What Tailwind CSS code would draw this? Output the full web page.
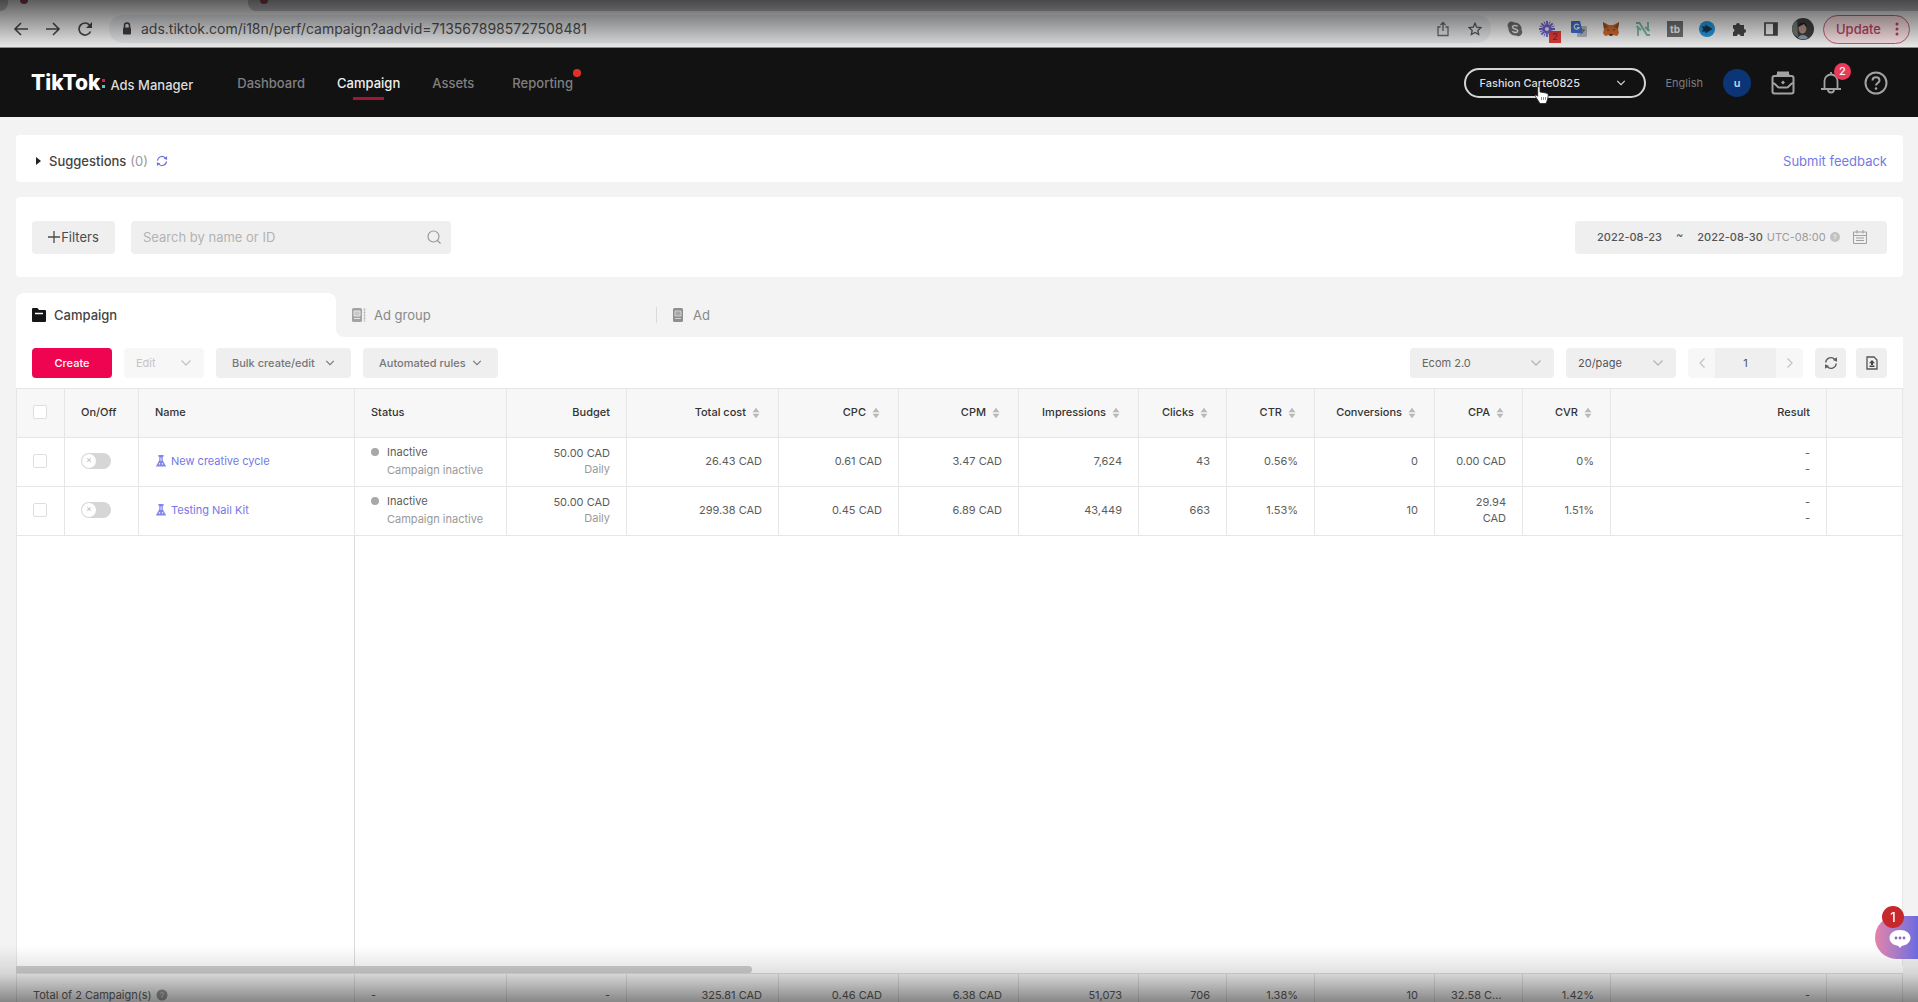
<!DOCTYPE html>
<html lang="en">
<head>
  <meta charset="UTF-8">
  <meta name="viewport" content="width=device-width, initial-scale=1">
  <title>TikTok Ads Manager</title>
  <script src="https://cdn.jsdelivr.net/npm/@tailwindcss/browser@4"></script>
</head>
<body class="h-screen flex flex-col overflow-hidden bg-[#f3f3f3] font-['Inter',sans-serif] text-[11px] leading-4 text-[#5c5c5c]">

  <!-- shared icons -->
  <svg class="hidden">
    <symbol id="chevron" viewBox="0 0 12 8"><path d="M1.500 1.500 6 6l4.500-4.500" fill="none" stroke="currentColor" stroke-width="1.300"/></symbol>
    <symbol id="sort" viewBox="0 0 9 14"><path d="M4.500 1 8.500 6H.5zM4.500 13 8.500 8H.5z" fill="#b9b9b9"/></symbol>
    <symbol id="flask" viewBox="0 0 12 14"><path d="M3 0h6v2H8v4l4 7.500H0L4 6V2H3z" fill="#8286e8"/><path d="M5.500 3h1v4h-1zM3.500 9.500H5V11H3.500zM7 9.500h1.500V11H7z" fill="#fff"/></symbol>
    <symbol id="refresh" viewBox="0 0 16 16"><path d="M14 8.500A6 6 0 0 1 3.500 12M2 7.500A6 6 0 0 1 12.500 4" fill="none" stroke="currentColor" stroke-width="1.500"/><path d="M14.800 1.500v5l-4.600-1.800zM1.200 14.500v-5l4.600 1.800z" fill="currentColor"/></symbol>
  </svg>

  <!-- browser chrome -->
  <div class="relative shrink-0 bg-[#e8e8e8] border-b border-[#8c8c8c]">
    <div class="h-[11px] bg-[#b4b5b9] flex">
      <div class="w-[248px] bg-[#e8e8e8] flex"><div class="w-2 bg-[#b4b5b9] rounded-br-lg"></div><div class="ml-3 w-2 h-1 rounded-b bg-[#8f3d4c]"></div></div>
      <div class="flex-1 bg-[#e8e8e8]"><div class="h-full bg-[#b4b5b9] rounded-bl-lg px-3"><div class="w-2 h-1 rounded-b bg-[#8f3d4c]"></div></div></div>
    </div>
    <div class="h-9 flex items-center pl-[5px] pr-2 text-[#444]">
      <button class="w-8 grid place-items-center" aria-label="Back"><svg class="size-4" viewBox="0 0 16 16" fill="none" stroke="currentColor" stroke-width="1.600"><path d="M15 8H2M8 2 2 8l6 6"/></svg></button>
      <button class="w-8 grid place-items-center" aria-label="Forward"><svg class="size-4" viewBox="0 0 16 16" fill="none" stroke="currentColor" stroke-width="1.600"><path d="M1 8h13M8 2l6 6-6 6"/></svg></button>
      <button class="w-8 grid place-items-center" aria-label="Reload"><svg class="size-4" viewBox="0 0 16 16"><path d="M13.500 10.500A6 6 0 1 1 12.500 4" fill="none" stroke="currentColor" stroke-width="1.700"/><path d="M15 1v6H9z" fill="currentColor"/></svg></button>
      <div class="flex-1 h-7 ml-2 pl-3 rounded-full bg-[#dadbdd] flex items-center">
        <svg class="w-3 h-4 mr-2" viewBox="0 0 12 16"><path d="M3.500 7V4.500a2.500 2.500 0 0 1 5 0V7" fill="none" stroke="#3c3c3c" stroke-width="1.500"/><rect x="2" y="6.500" width="8" height="7" rx="1" fill="#3c3c3c"/></svg>
        <input class="flex-1 text-sm text-[#4a4a4a] outline-none" aria-label="Address" value="ads.tiktok.com/i18n/perf/campaign?aadvid=7135678985727508481">
        <button class="w-8 grid place-items-center" aria-label="Share"><svg class="w-3 h-4" viewBox="0 0 12 16" fill="none" stroke="#666" stroke-width="1.300"><path d="M3.500 6H1v8.500h10V6H8.500M6 10V1.500M3.500 4 6 1.500 8.500 4"/></svg></button>
        <button class="w-8 grid place-items-center" aria-label="Bookmark"><svg class="size-3.5" viewBox="0 0 16 16" fill="none" stroke="#555" stroke-width="1.500"><path d="m8 1.500 2 4.400 4.800.5-3.600 3.200 1 4.700L8 11.900l-4.200 2.400 1-4.700L1.200 6.400 6 5.900z"/></svg></button>
      </div>
      <div class="flex items-center pl-2">
        <span class="w-8 grid place-items-center"><svg class="size-4" viewBox="0 0 16 16"><path d="M4.500.5a4 4 0 0 1 2.600 1A6.600 6.600 0 0 1 14.500 9a4 4 0 0 1-5.600 5.500A6.600 6.600 0 0 1 1.500 7a4 4 0 0 1 3-6.500z" fill="#6b6b6b"/><path d="M10.500 5.500C9.500 4 5.500 4 5.500 6.200 5.500 8.500 10.700 7.500 10.700 9.800c0 2.200-4.200 2.200-5.200.2" fill="none" stroke="#e4e4e4" stroke-width="1.500"/></svg></span>
        <span class="w-8 grid place-items-center relative"><svg class="size-4" viewBox="0 0 16 16" stroke="#6a5ccb" stroke-width="1.800"><path d="M8 0v16M0 8h16M2.300 2.300l11.400 11.400M13.700 2.300 2.300 13.700"/><path d="M5 .7l6 14.600M11 .7 5 15.300M.7 5l14.600 6M.7 11l14.600-6" stroke-width="1"/><circle cx="8" cy="8" r="3" fill="#dcdcdc"/></svg><span class="absolute left-[18px] top-2.5 size-3 bg-[#d83a36] text-[#7d1d1d] text-[9px] leading-3 text-center">2</span></span>
        <span class="w-8 grid place-items-center"><svg class="size-4" viewBox="0 0 16 16"><rect x="6" y="5" width="10" height="11" rx="1" fill="#a9b2ba"/><path d="M1 0h8l3 12H1a1 1 0 0 1-1-1V1a1 1 0 0 1 1-1z" fill="#3d6cc6"/><path d="M7.800 4.200a2.500 2.500 0 1 0 .3 2.300H6" fill="none" stroke="#dbe5f6" stroke-width="1.200"/><path d="M9 9h5M11.500 8v1M13 9c-.5 2-2 3.500-3.500 4" fill="none" stroke="#56666f"/></svg></span>
        <span class="w-8 grid place-items-center"><svg class="size-4" viewBox="0 0 16 16"><path d="m0 1 6 3h4l6-3-1 7 1 4-2 3-4-1-1 1H7l-1-1-4 1-2-3 1-4z" fill="#c9652a"/><path d="m0 1 5 5-4 2zM16 1l-5 5 4 2z" fill="#8b4a22"/><path d="m4 8 2 1-1 1zM12 8l-2 1 1 1zM6.500 13h3v1.500h-3z" fill="#33302e"/></svg></span>
        <span class="w-8 grid place-items-center"><svg class="size-4" viewBox="0 0 16 16" fill="none" stroke="#6fb09b" stroke-width="1.800"><path d="M1 2h3.500L12 14h3M3 15V6M13 1v9M1.500 5 6 9M10 6l4.500 4"/></svg></span>
        <span class="w-8 grid place-items-center"><span class="size-4 bg-[#6e6e6e] text-[#ececec] text-[10px] leading-4 font-bold text-center">tb</span></span>
        <span class="w-8 grid place-items-center"><svg class="size-4" viewBox="0 0 16 16"><circle cx="8" cy="8" r="8" fill="#2191d6"/><path d="M2.500 5.500h4v-2L13.500 8l-7 4.500v-2h-4l2-2.500z" fill="#16354c"/></svg></span>
        <span class="w-8 grid place-items-center"><svg class="size-4" viewBox="0 0 16 16"><path d="M5 4a2 2 0 1 1 4 0h4v4a2 2 0 1 1 0 4v3H9.500a1.800 1.800 0 0 0-3.600 0H2v-4a1.800 1.800 0 0 0 0-3.500V4z" fill="#454545"/></svg></span>
        <span class="w-8 grid place-items-center"><svg class="size-4" viewBox="0 0 16 16"><path d="M2 2h12v12H2z" fill="none" stroke="#454545" stroke-width="1.700"/><path d="M10 2h4v12h-4z" fill="#454545"/></svg></span>
        <span class="w-8 grid place-items-center"><svg class="size-[22px]" viewBox="0 0 22 22"><circle cx="11" cy="11" r="11" fill="#3a3d3f"/><path d="M0 11a11 11 0 0 1 5-9l1 17a11 11 0 0 1-6-8z" fill="#6f7a70"/><ellipse cx="10.500" cy="10" rx="4" ry="5.500" fill="#b08f80"/><path d="M6 9c1-6 9-6 9 1l-3-4z" fill="#1f1d1d"/><path d="M6 20c1-4 8-4 10 0a11 11 0 0 1-10 0z" fill="#8b9aa8"/></svg></span>
        <button class="ml-1 h-[29px] pl-3 pr-2.5 rounded-full border border-[#c2556e] bg-[#f0d9dc] text-[#b5405a] text-[13px] font-medium flex items-center gap-3.5">Update<svg class="w-1 h-4" viewBox="0 0 4 16" fill="currentColor"><circle cx="2" cy="3" r="1.500"/><circle cx="2" cy="8" r="1.500"/><circle cx="2" cy="13" r="1.500"/></svg></button>
      </div>
    </div>
    <div class="absolute inset-0 pointer-events-none bg-linear-to-b from-black/60 to-transparent"></div>
  </div>

  <!-- header -->
  <header class="shrink-0 h-[69px] bg-[#121212] flex items-center pl-[31px] pr-[30px]">
    <a href="#" class="flex items-baseline text-white"><span class="text-[21px] leading-6 font-extrabold">TikTok</span><svg class="w-1 h-3 mx-0.5" viewBox="0 0 4 12"><rect y="1" width="3" height="3" fill="#c22447"/><rect y="7" width="3" height="3" fill="#4fc9c2"/></svg><span class="ml-0.5 text-[13px] font-medium text-[#dcdcdc]">Ads Manager</span></a>
    <nav class="flex gap-8 ml-11 text-[13px] text-[#808080] font-medium">
      <a href="#">Dashboard</a>
      <a href="#" class="relative text-[#f0f0f0]">Campaign<span class="absolute left-4 right-4 top-[22px] h-[3px] bg-[#a3163a]"></span></a>
      <a href="#">Assets</a>
      <a href="#" class="relative ml-1.5">Reporting<span class="absolute -right-2 -top-1.5 size-2 rounded-full bg-[#e0302c]"></span></a>
    </nav>
    <div class="ml-auto flex items-center">
      <button class="relative w-[182px] h-[30px] rounded-full border-2 border-[#d5d5d5] px-3.5 flex items-center justify-between text-[#dedede] font-medium">Fashion Carte0825<svg class="w-2.5 h-2 mr-1"><use href="#chevron"/></svg>
        <svg class="absolute left-[68px] top-[15px] w-4 h-5" viewBox="0 0 16 20"><path d="M4.500 1.500c1 0 1.500.5 1.500 1.500v4l6 1c2 .4 2.500 1.500 2.200 3l-.8 4-1.400 3.500H6L1.500 11.500c-1-1.500.5-2 1.500-1l.7.800V3c0-1 .3-1.500.8-1.500z" fill="#fff" stroke="#222" stroke-width=".8"/><path d="M7.500 12v3M9.500 12v3M11.500 12v3" stroke="#777" stroke-width=".8"/></svg>
      </button>
      <button class="ml-5 text-[#7d7d7d]">English</button>
      <button class="ml-5 size-7 rounded-full bg-[#0b3577] text-[#c9d3e6] font-semibold">u</button>
      <button class="ml-5 text-[#a2a2a2]" aria-label="Business center"><svg class="size-6" viewBox="0 0 24 24" fill="none" stroke="currentColor" stroke-width="2"><rect x="1.500" y="5" width="21" height="17.500" rx="2"/><path d="M7 5V1.500h10V5M7 2.500h10M2 12c3 .5 4 4.500 6 4.500h8c2 0 3-4 6-4.500M5 4.500h14"/><path d="m12 9.500 2 2-2 2-2-2z" fill="currentColor" stroke="none"/></svg></button>
      <button class="relative ml-[26px] text-[#a2a2a2]" aria-label="Notifications"><svg class="w-5 h-6" viewBox="0 0 20 24" fill="none" stroke="currentColor" stroke-width="1.800"><path d="M0 18h20M3.500 18v-8a6.500 6.500 0 0 1 13 0v8M7 18.500c0 4 6 4 6 0M10 3.500V1"/></svg><span class="absolute left-[13px] -top-2 size-[17px] rounded-full bg-[#e83b5b] text-white leading-[17px] text-center font-medium">2</span></button>
      <button class="ml-[23px] text-[#a2a2a2]" aria-label="Help"><svg class="size-6" viewBox="0 0 24 24" fill="none" stroke="currentColor" stroke-width="2"><circle cx="12" cy="12" r="10.500"/><path d="M8.500 9.500c0-4.500 7-4.500 7 0 0 2.500-3.500 2.500-3.500 5"/><circle cx="12" cy="17.500" r="1.300" fill="currentColor" stroke="none"/></svg></button>
    </div>
  </header>

  <main class="flex-1 min-h-0 flex flex-col pl-4 pr-[15px] pt-[18px]">
    <section class="shrink-0 h-[47px] pt-[5px] bg-white rounded flex items-center pl-5 pr-4 text-[13px]">
      <button class="flex items-center text-[#444] font-medium"><svg class="w-[5px] h-2 mr-2" viewBox="0 0 5 8"><path d="M0 0l5 4-5 4z" fill="#222"/></svg>Suggestions</button>
      <span class="ml-1 text-[#999]">(0)</span>
      <button class="ml-2 text-[#6a70dc]" aria-label="Refresh suggestions"><svg class="size-3"><use href="#refresh"/></svg></button>
      <a href="#" class="ml-auto text-[#7478e6]">Submit feedback</a>
    </section>

    <section class="shrink-0 h-20 mt-[15px] bg-white rounded flex items-center px-4">
      <button class="w-[83px] h-[33px] rounded bg-[#efefef] flex items-center justify-center gap-px text-[13px] text-[#4b4b4b]"><svg class="size-3" viewBox="0 0 12 12" stroke="currentColor" stroke-width="1.300"><path d="M6 0v12M0 6h12"/></svg>Filters</button>
      <label class="ml-4 w-80 h-[33px] rounded bg-[#efefef] flex items-center pl-3 pr-2.5"><input type="text" aria-label="Search" placeholder="Search by name or ID" class="flex-1 text-[13px] outline-none placeholder:text-[#b3b3b3]"><svg class="size-3.5" viewBox="0 0 14 14" fill="none" stroke="#999" stroke-width="1.200"><circle cx="6.500" cy="6.500" r="5.500"/><path d="m10.500 10.500 3 3"/></svg></label>
      <button class="ml-auto w-[312px] h-[33px] rounded bg-[#efefef] flex items-center pl-[22px] pr-5 text-[#555] whitespace-nowrap"><span class="font-medium">2022-08-23</span><span class="mx-3.5 -mt-1">~</span><span class="font-medium">2022-08-30</span><span class="ml-1 text-[#9c9c9c]">UTC-08:00</span>
        <svg class="ml-1 size-2.5" viewBox="0 0 10 10"><circle cx="5" cy="5" r="5" fill="#c2c2c2"/><path d="M4 4c0-1.500 2-1.500 2 0 0 1-1 .8-1 2v1" fill="none" stroke="#efefef"/></svg>
        <svg class="ml-auto size-3.5" viewBox="0 0 14 14" fill="none" stroke="#a0a0a0"><path d="M.5 2h13v11.500H.5zM.5 5.500h13M4 0v3.500M10 0v3.500M3 8h8M3 10.500h8"/></svg></button>
    </section>

    <nav class="shrink-0 mt-4 h-11 flex text-[13px] text-[#888]">
      <a href="#" class="w-[320px] bg-white rounded-t-lg flex items-center pl-4 text-[#444] font-medium"><svg class="size-3.5 mr-2" viewBox="0 0 14 14"><path d="M1 0h4.500L7 2h6a1 1 0 0 1 1 1v10a1 1 0 0 1-1 1H1a1 1 0 0 1-1-1V1a1 1 0 0 1 1-1z" fill="#151515"/><path d="M3 5.500h8" stroke="#fff" stroke-width="1.500"/></svg>Campaign</a>
      <div class="flex-1 bg-white"><div class="h-full bg-[#f3f3f3] rounded-bl-lg flex items-center">
        <a href="#" class="w-80 flex items-center pl-4"><svg class="size-3.5 mr-2" viewBox="0 0 14 14"><rect width="10" height="14" rx="1.500" fill="#a3a3a3"/><path d="M2 3h6v5H2zM2 10.500h6" fill="#c8c8c8" stroke="#e6e6e6"/><path d="M12.500.5v13" stroke="#b0b0b0" stroke-width="1.500" stroke-dasharray="2 1"/></svg>Ad group</a>
        <a href="#" class="h-4 flex items-center pl-4 border-l border-[#dadada]"><svg class="w-2.5 h-3.5 mr-2.5" viewBox="0 0 10 14"><rect width="10" height="14" rx="1.500" fill="#8f8f8f"/><path d="M2 3h6v5H2zM2 10.500h6" fill="#a8a8a8" stroke="#d0d0d0"/></svg>Ad</a>
      </div></div>
    </nav>

    <section class="flex-1 min-h-0 bg-white flex flex-col">
      <div class="shrink-0 h-[51px] flex items-center px-4">
        <button class="w-20 h-[30px] rounded-sm bg-[#ee0450] text-white font-medium">Create</button>
        <button disabled class="ml-3 w-20 h-[30px] rounded-sm bg-[#f7f7f7] text-[#c4c4c4] flex items-center justify-between px-3">Edit<svg class="w-3 h-2"><use href="#chevron"/></svg></button>
        <button class="ml-3 w-[135px] h-[30px] rounded-sm bg-[#efefef] flex items-center justify-between px-4 font-medium text-[#777]">Bulk create/edit<svg class="w-2.5 h-2"><use href="#chevron"/></svg></button>
        <button class="ml-3 w-[135px] h-[30px] rounded-sm bg-[#efefef] flex items-center justify-between px-4 font-medium text-[#777]">Automated rules<svg class="w-2.5 h-2"><use href="#chevron"/></svg></button>
        <div class="relative ml-auto"><select aria-label="Columns" class="appearance-none w-36 h-[30px] rounded-sm bg-[#efefef] pl-3 text-[#666]"><option>Ecom 2.0</option></select><svg class="absolute right-3 top-[11px] w-3 h-2 text-[#b5b5b5] pointer-events-none"><use href="#chevron"/></svg></div>
        <div class="relative ml-3"><select aria-label="Rows per page" class="appearance-none w-[110px] h-[30px] rounded-sm bg-[#efefef] pl-3 text-[#555]"><option>20/page</option></select><svg class="absolute right-3 top-[11px] w-3 h-2 text-[#b5b5b5] pointer-events-none"><use href="#chevron"/></svg></div>
        <div class="ml-3 h-[30px] flex items-center rounded-sm overflow-hidden bg-[#f7f7f7] text-[#c4c4c4]">
          <button class="w-[27px] grid place-items-center" aria-label="Previous page"><svg class="w-3 h-2 rotate-90"><use href="#chevron"/></svg></button>
          <input aria-label="Page" value="1" class="w-[61px] h-full bg-[#efefef] text-center text-[#555] outline-none">
          <button class="w-[27px] grid place-items-center" aria-label="Next page"><svg class="w-3 h-2 -rotate-90"><use href="#chevron"/></svg></button>
        </div>
        <button class="ml-3 w-[31px] h-[30px] rounded-sm bg-[#efefef] grid place-items-center" aria-label="Refresh"><svg class="size-3.5"><use href="#refresh"/></svg></button>
        <button class="ml-2.5 w-[31px] h-[30px] rounded-sm bg-[#efefef] grid place-items-center" aria-label="Export"><svg class="w-3 h-3.5" viewBox="0 0 12 14"><path d="M1 1h7l3 3v9H1z" fill="none" stroke="#555" stroke-width="1.300"/><path d="M6 4 3 7.200h2V9h2V7.200h2zM3.500 9.500h5V11h-5z" fill="#444"/></svg></button>
      </div>

      <table class="shrink-0 w-full table-fixed border border-[#e6e6e6] border-collapse text-right [&_td]:border [&_td]:border-[#e6e6e6] [&_td]:px-4 [&_td]:pb-0.5 [&_th]:border [&_th]:border-[#e6e6e6] [&_th]:px-4 [&_th]:pb-0.5 [&_th]:font-medium [&_th]:text-[#333] [&_th]:whitespace-nowrap">
        <colgroup><col class="w-12"><col class="w-[74px]"><col class="w-[216px]"><col class="w-[152px]"><col class="w-[120px]"><col class="w-[152px]"><col class="w-[120px]"><col class="w-[120px]"><col class="w-[120px]"><col class="w-[88px]"><col class="w-[88px]"><col class="w-[120px]"><col class="w-[88px]"><col class="w-[88px]"><col class="w-[216px]"><col></colgroup>
        <thead>
          <tr class="h-[49px] bg-[#f7f7f7]">
            <th><input type="checkbox" aria-label="Select all" class="block appearance-none size-3.5 rounded-xs border border-[#dedede] bg-white"></th>
            <th class="text-left">On/Off</th>
            <th class="text-left">Name</th>
            <th class="text-left">Status</th>
            <th>Budget</th>
            <th><span class="flex items-center justify-end gap-1.5 pr-0.5">Total cost<svg class="mt-0.5 w-2 h-3"><use href="#sort"/></svg></span></th>
            <th><span class="flex items-center justify-end gap-1.5 pr-0.5">CPC<svg class="mt-0.5 w-2 h-3"><use href="#sort"/></svg></span></th>
            <th><span class="flex items-center justify-end gap-1.5 pr-0.5">CPM<svg class="mt-0.5 w-2 h-3"><use href="#sort"/></svg></span></th>
            <th><span class="flex items-center justify-end gap-1.5 pr-0.5">Impressions<svg class="mt-0.5 w-2 h-3"><use href="#sort"/></svg></span></th>
            <th><span class="flex items-center justify-end gap-1.5 pr-0.5">Clicks<svg class="mt-0.5 w-2 h-3"><use href="#sort"/></svg></span></th>
            <th><span class="flex items-center justify-end gap-1.5 pr-0.5">CTR<svg class="mt-0.5 w-2 h-3"><use href="#sort"/></svg></span></th>
            <th><span class="flex items-center justify-end gap-1.5 pr-0.5">Conversions<svg class="mt-0.5 w-2 h-3"><use href="#sort"/></svg></span></th>
            <th><span class="flex items-center justify-end gap-1.5 pr-0.5">CPA<svg class="mt-0.5 w-2 h-3"><use href="#sort"/></svg></span></th>
            <th><span class="flex items-center justify-end gap-1.5 pr-0.5">CVR<svg class="mt-0.5 w-2 h-3"><use href="#sort"/></svg></span></th>
            <th>Result</th>
            <th></th>
          </tr>
        </thead>
        <tbody>
          <tr class="h-[49px]">
            <td><input type="checkbox" aria-label="Select New creative cycle" class="block appearance-none size-3.5 rounded-xs border border-[#dedede] bg-white"></td>
            <td><button role="switch" aria-checked="false" aria-label="Enable New creative cycle" class="flex w-[30px] h-4 rounded-full bg-[#d6d6d6] p-px"><span class="size-3.5 rounded-full bg-white text-[9px] leading-3 text-[#bbb]">×</span></button></td>
            <td class="text-left"><a href="#" class="flex items-center gap-1 text-[#7478e6]"><svg class="w-3 h-3"><use href="#flask"/></svg>New creative cycle</a></td>
            <td class="text-left"><div class="flex items-center gap-2"><span class="size-2 rounded-full bg-[#a8a8a8]"></span>Inactive</div><div class="pl-4 mt-0.5 text-[#999] whitespace-nowrap">Campaign inactive</div></td>
            <td>50.00 CAD<div class="text-[#999]">Daily</div></td>
            <td>26.43 CAD</td>
            <td>0.61 CAD</td>
            <td>3.47 CAD</td>
            <td>7,624</td>
            <td>43</td>
            <td>0.56%</td>
            <td>0</td>
            <td class="whitespace-nowrap">0.00 CAD</td>
            <td>0%</td>
            <td>-<br>-</td>
            <td></td>
          </tr>
          <tr class="h-[49px]">
            <td><input type="checkbox" aria-label="Select Testing Nail Kit" class="block appearance-none size-3.5 rounded-xs border border-[#dedede] bg-white"></td>
            <td><button role="switch" aria-checked="false" aria-label="Enable Testing Nail Kit" class="flex w-[30px] h-4 rounded-full bg-[#d6d6d6] p-px"><span class="size-3.5 rounded-full bg-white text-[9px] leading-3 text-[#bbb]">×</span></button></td>
            <td class="text-left"><a href="#" class="flex items-center gap-1 text-[#7478e6]"><svg class="w-3 h-3"><use href="#flask"/></svg>Testing Nail Kit</a></td>
            <td class="text-left"><div class="flex items-center gap-2"><span class="size-2 rounded-full bg-[#a8a8a8]"></span>Inactive</div><div class="pl-4 mt-0.5 text-[#999] whitespace-nowrap">Campaign inactive</div></td>
            <td>50.00 CAD<div class="text-[#999]">Daily</div></td>
            <td>299.38 CAD</td>
            <td>0.45 CAD</td>
            <td>6.89 CAD</td>
            <td>43,449</td>
            <td>663</td>
            <td>1.53%</td>
            <td>10</td>
            <td>29.94<br>CAD</td>
            <td>1.51%</td>
            <td>-<br>-</td>
            <td></td>
          </tr>
        </tbody>
      </table>

      <div class="flex-1 min-h-0 border-x border-[#e6e6e6]"><div class="w-[338px] h-full border-r border-[#dcdcdc]"></div></div>
      <div class="shrink-0 h-2 border-b border-[#dcdcdc]"><div class="w-[39%] h-[7px] rounded-r-sm bg-[#d0d0d0]"></div></div>

      <!-- totals row, cut off by the bottom of the window -->
      <div class="shrink-0 h-7 overflow-hidden">
        <table class="w-full table-fixed border-collapse text-right bg-[#f4f4f4] whitespace-nowrap [&_td]:border-x [&_td]:border-[#dcdcdc] [&_td]:px-4">
          <colgroup><col class="w-[338px]"><col class="w-[152px]"><col class="w-[120px]"><col class="w-[152px]"><col class="w-[120px]"><col class="w-[120px]"><col class="w-[120px]"><col class="w-[88px]"><col class="w-[88px]"><col class="w-[120px]"><col class="w-[88px]"><col class="w-[88px]"><col class="w-[216px]"><col></colgroup>
          <tbody>
            <tr class="h-[42px]">
              <td><span class="flex items-center gap-1">Total of 2 Campaign(s)<svg class="size-3" viewBox="0 0 12 12"><circle cx="6" cy="6" r="5.500" fill="#999"/><path d="M4.500 5c0-2 3-2 3 0C7.500 6.200 6 6 6 7.500V9" fill="none" stroke="#ddd"/></svg></span></td>
              <td class="text-left">-</td>
              <td>-</td>
              <td>325.81 CAD</td>
              <td>0.46 CAD</td>
              <td>6.38 CAD</td>
              <td>51,073</td>
              <td>706</td>
              <td>1.38%</td>
              <td>10</td>
              <td><div class="truncate">32.58 CAD</div></td>
              <td>1.42%</td>
              <td>-</td>
              <td></td>
            </tr>
          </tbody>
        </table>
      </div>
    </section>
  </main>

  <div class="fixed inset-x-0 bottom-0 h-14 pointer-events-none bg-linear-to-t from-black/45 via-black/12 to-transparent"></div>

  <!-- chat launcher -->
  <button aria-label="Chat" class="fixed right-0 bottom-[43px] w-[43px] h-[43px] rounded-l-full bg-linear-to-r from-[#e482a8] to-[#6b6ae0]">
    <svg class="absolute left-[14px] top-3.5 w-[22px] h-[18px]" viewBox="0 0 22 18"><path d="M11 0c6 0 10.500 3.500 10.500 8S17 15.500 13 15.800L11 18l-2-2.200C5 15.500.5 12.500.5 8S5 0 11 0z" fill="#fff"/><circle cx="7" cy="8" r="1.400" fill="#8a6bc4"/><circle cx="11" cy="8" r="1.400" fill="#8a6bc4"/><circle cx="15" cy="8" r="1.400" fill="#8a6bc4"/></svg>
    <span class="absolute left-[7px] -top-[10px] size-[22px] rounded-full bg-[#c6282b] text-white text-[13px] leading-[22px] font-medium text-center">1</span>
  </button>

</body>
</html>
